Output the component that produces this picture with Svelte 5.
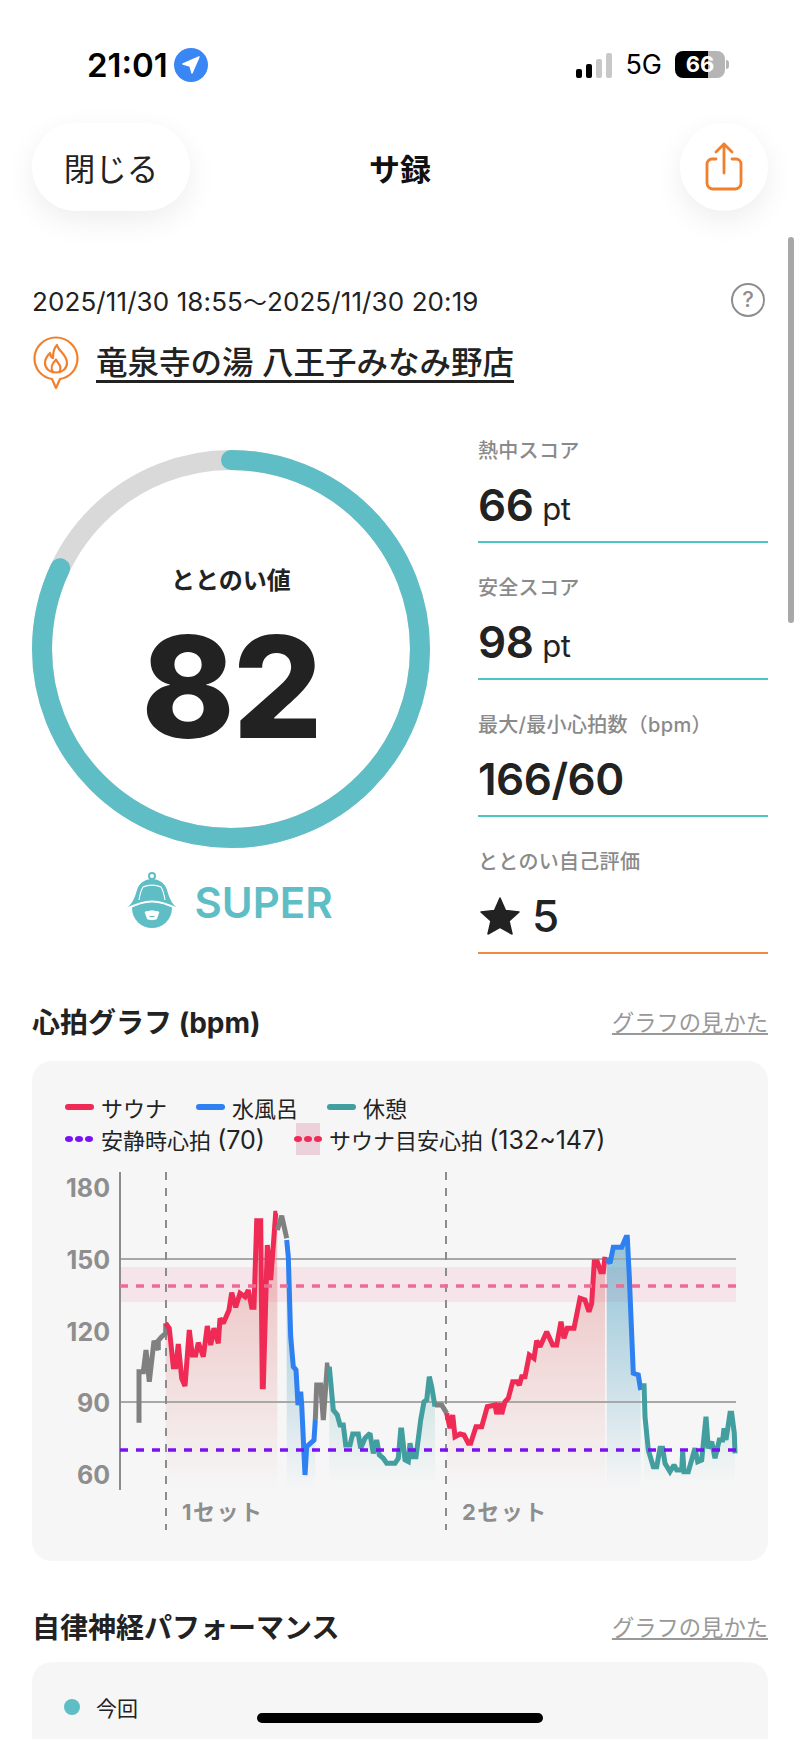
<script>
  // points are read off the chart at 3x, so convert them back to page pixels
  const toPts = (ox, oy, s) =>
    s.trim().split(/\s+/).map((p) => {
      const [x, y] = p.split(',').map(Number)
      return [ox + x / 3, oy + y / 3]
    })
  const a = (s) => toPts(30, 1070, s)
  const b = (s) => toPts(400, 1150, s)

  const COLORS = { red: '#ee2a55', blue: '#2f80f0', teal: '#429e9f', grey: '#808080' }

  const series = [
    { c: 'grey', p: a('327,1058 327,905 340,905 348,840 358,935 372,812 385,840 385,812 395,800 407,790 407,760') },
    { c: 'red', fill: true, p: a('407,760 418,775 430,890 437,890 445,822 455,925 465,948 478,780 487,855 497,855 505,818 520,860 532,768 542,825 552,775 565,820 570,745 580,760 597,720 605,668 617,712 630,670 645,680 655,660 665,712 672,712 680,452 692,452 697,950 700,950 712,525 722,630 737,430 742,430') },
    { c: 'grey', p: a('742,480 755,437 770,505') },
    { c: 'blue', fill: true, p: a('770,510 775,560 782,800 790,890 798,900 804,1005 812,965 815,1005 825,1215 830,1130 852,1110 856,1050') },
    { c: 'grey', p: a('856,1050 860,945 872,945 880,1050 892,885 898,885') },
    { c: 'teal', fill: true, p: [
      ...a('898,890 910,1020 922,1035 930,1065 940,1065 947,1125 960,1125 968,1092 985,1092 992,1135 1005,1105 1020,1090 1030,1150 1040,1110 1048,1155 1060,1165 1070,1180 1095,1180 1105,1165 1112,1080'),
      ...b('5,840 15,930 25,935 30,880 38,920 48,920 62,810 72,755 80,750 88,680 95,710 105,770')
    ] },
    { c: 'grey', p: b('105,765 125,765 140,790') },
    { c: 'red', fill: true, p: b('140,790 150,835 158,795 165,860 180,852 192,855 205,880 212,880 228,830 245,830 262,770 285,765 290,792 300,760 305,792 315,755 325,745 338,695 350,695 358,705 365,680 375,680 388,615 402,625 410,572 420,590 440,545 458,585 470,585 483,515 492,565 502,535 522,535 540,445 555,450 567,485 575,460 583,335 592,335 602,365 610,365 615,320') },
    { c: 'blue', fill: true, p: b('620,325 630,340 640,292 665,292 678,262 682,262 688,380 700,670 715,675 722,720') },
    { c: 'teal', fill: true, p: b('732,700 735,800 745,900 760,950 770,950 780,895 788,895 795,940 810,965 822,945 830,960 845,960 848,905 852,965 865,965 885,895 893,935 905,930 918,800 925,895 935,875 945,925 958,870 968,870 972,835 978,870 990,790 995,790 1003,850 1005,910') }
  ]

  const str = (p) => p.map(([x, y]) => `${x.toFixed(1)},${y.toFixed(1)}`).join(' ')
  const area = (p) => `${str(p)} ${p[p.length - 1][0].toFixed(1)},1490 ${p[0][0].toFixed(1)},1490`

  const yLabels = [
    { t: '180', y: 1197 },
    { t: '150', y: 1269 },
    { t: '120', y: 1341 },
    { t: '90', y: 1412 },
    { t: '60', y: 1484 }
  ]

  const stats = [
    { label: '熱中スコア', value: '66', unit: 'pt' },
    { label: '安全スコア', value: '98', unit: 'pt' },
    { label: '最大/最小心拍数（bpm）', value: '166/60' }
  ]

  const R = 189
  const CIRC = 2 * Math.PI * R
  const score = 82
</script>

<div class="page">
  <div class="status">
    <div class="status-left">
      <span class="time">21:01</span>
      <svg class="loc" viewBox="0 0 34 34">
        <circle cx="17" cy="17" r="17" fill="#3a86f5" />
        <path d="M25 9 L9 16 L16 18 L18 25 Z" fill="#fff" stroke="#fff" stroke-width="1.4" stroke-linejoin="round" />
      </svg>
    </div>
    <div class="status-right">
      <div class="signal">
        <i class="on h1"></i><i class="on h2"></i><i class="h3"></i><i class="h4"></i>
      </div>
      <span class="net">5G</span>
      <div class="battery"><span>66</span></div>
      <div class="cap"></div>
    </div>
  </div>

  <header class="nav">
    <button class="close">閉じる</button>
    <div class="title">サ録</div>
    <button class="share" aria-label="share">
      <svg width="38" height="50" viewBox="0 0 38 50" fill="none" stroke="#f07f2e" stroke-width="2.8" stroke-linecap="round" stroke-linejoin="round">
        <path d="M11 17 H7 A5 5 0 0 0 2 22 V41 A6 6 0 0 0 8 47 H30 A6 6 0 0 0 36 41 V22 A5 5 0 0 0 31 17 H27" />
        <path d="M19 31 V2 M11 10 L19 2 L27 10" />
      </svg>
    </button>
  </header>

  <section class="summary">
    <div class="date-row">
      <span class="date">2025/11/30 18:55<span class="tilde">～</span>2025/11/30 20:19</span>
      <span class="help">?</span>
    </div>
    <div class="venue">
      <svg width="46" height="54" viewBox="0 0 46 54" fill="none" stroke="#f07f2e" stroke-width="2.2" stroke-linejoin="round" stroke-linecap="round">
        <path d="M23 1.5 C11 1.5 1.5 11 1.5 22.5 C1.5 33 9 41.5 19 43 L23 52 L27 43 C37 41.5 44.5 33 44.5 22.5 C44.5 11 35 1.5 23 1.5 Z" />
        <path d="M24 9 C25 15 34 18 34 27 C34 33 29 36.5 23 36.5 C17 36.5 12 33 12 27 C12 23 14 20 17 17 C17.5 20 18.5 21.5 20 22 C20 17 21 12 24 9 Z" />
        <path d="M20 36 C17 32 18.5 28.5 23 23.5 C25 28 29.5 30 26.5 36" />
      </svg>
      <span class="venue-name">竜泉寺の湯 八王子みなみ野店</span>
    </div>

    <div class="score">
      <div class="gauge-col">
        <div class="gauge">
          <svg width="398" height="398" viewBox="0 0 398 398" fill="none">
            <circle cx="199" cy="199" r={R} stroke="#d9d9d9" stroke-width="20" />
            <circle
              cx="199"
              cy="199"
              r={R}
              stroke="#5fbec5"
              stroke-width="20"
              stroke-linecap="round"
              stroke-dasharray={`${(CIRC * score) / 100} ${CIRC}`}
              transform="rotate(-90 199 199)"
            />
          </svg>
          <div class="gauge-text">
            <div class="gauge-label">ととのい値</div>
            <div class="gauge-value">{score}</div>
          </div>
        </div>
        <div class="rank">
          <svg width="52" height="57" viewBox="0 0 52 57">
            <circle cx="26" cy="36" r="20" fill="#5fbec5" />
            <path d="M1 36 C7 31 9 25 11 18 C13 11 19 7 26 7 C33 7 39 11 41 18 C43 25 45 31 51 36 C40 30 33 28 26 28 C19 28 12 30 1 36 Z" fill="#5fbec5" />
            <path d="M1 37 C12 31 19 29.5 26 29.5 C33 29.5 40 31 51 37" fill="none" stroke="#fff" stroke-width="2" />
            <path d="M13 28 C14 22 15 18 17 15 C22 12.5 30 12.5 35 15 C37 18 38 22 39 28" fill="none" stroke="#fff" stroke-width="1.1" />
            <circle cx="26" cy="4" r="3" fill="none" stroke="#5fbec5" stroke-width="2" />
            <path d="M19 40 Q26 37.5 33 40 L30.5 47 Q26 48.5 21.5 47 Z" fill="#fff" stroke="#fff" stroke-width="0.8" stroke-linejoin="round" />
            <path d="M23.5 44.5 H28.5" stroke="#5fbec5" stroke-width="1.2" />
          </svg>
          <span>SUPER</span>
        </div>
      </div>

      <div class="stats">
        {#each stats as s}
          <div class="stat">
            <div class="stat-label">{s.label}</div>
            <div class="stat-value">{s.value}{#if s.unit}<small>{s.unit}</small>{/if}</div>
          </div>
        {/each}
        <div class="stat orange">
          <div class="stat-label">ととのい自己評価</div>
          <div class="stat-value">
            <svg class="star" width="40" height="38" viewBox="0 0 40 38">
              <path d="M20 1 L25.5 13.5 L39 15 L29 24 L32 37 L20 30.3 L8 37 L11 24 L1 15 L14.5 13.5 Z" fill="#222" stroke="#222" stroke-width="1.5" stroke-linejoin="round" />
            </svg>
            <span class="star-num">5</span>
          </div>
        </div>
      </div>
    </div>
  </section>

  <section class="block first">
    <div class="block-head">
      <h2>心拍グラフ (bpm)</h2>
      <span class="link">グラフの見かた</span>
    </div>
    <div class="card chart-card">
      <div class="legend">
        <div class="legend-row">
          <i class="swatch" style="background:{COLORS.red}"></i><span class="l1">サウナ</span>
          <i class="swatch" style="background:{COLORS.blue}"></i><span class="l2">水風呂</span>
          <i class="swatch" style="background:{COLORS.teal}"></i><span>休憩</span>
        </div>
        <div class="legend-row">
          <span class="dots purple"><i></i><i></i><i></i></span><span class="l3">安静時心拍 <b>(70)</b></span>
          <span class="band-key"><span class="dots pink"><i></i><i></i><i></i></span></span><span>サウナ目安心拍 <b>(132~147)</b></span>
        </div>
      </div>
      <svg class="chart" width="736" height="401" viewBox="32 1160 736 401" fill="none">
        <defs>
          <linearGradient id="g-red" gradientUnits="userSpaceOnUse" x1="0" y1="1260" x2="0" y2="1490">
            <stop offset="0" stop-color="#d84a4a" stop-opacity="0.3" />
            <stop offset="1" stop-color="#d84a4a" stop-opacity="0" />
          </linearGradient>
          <linearGradient id="g-blue" gradientUnits="userSpaceOnUse" x1="0" y1="1260" x2="0" y2="1490">
            <stop offset="0" stop-color="#3c96bc" stop-opacity="0.5" />
            <stop offset="1" stop-color="#3c96bc" stop-opacity="0" />
          </linearGradient>
          <linearGradient id="g-teal" gradientUnits="userSpaceOnUse" x1="0" y1="1380" x2="0" y2="1485">
            <stop offset="0" stop-color="#429e9f" stop-opacity="0.22" />
            <stop offset="1" stop-color="#429e9f" stop-opacity="0" />
          </linearGradient>
        </defs>

        <rect x="120" y="1267" width="616" height="35" fill="#ee6488" fill-opacity="0.12" />

        {#each series as s}
          {#if s.fill}
            <polygon points={area(s.p)} fill="url(#g-{s.c})" />
          {/if}
        {/each}

        <path d="M120 1259 H736 M120 1402 H736" stroke="#a8a8a8" stroke-width="2" />
        <path d="M166 1172 V1530 M446 1172 V1530" stroke="#8c8c8c" stroke-width="2" stroke-dasharray="8 8" />
        <path d="M120 1172 V1490" stroke="#8c8c8c" stroke-width="2" />

        {#each series as s}
          <polyline points={str(s.p)} stroke={COLORS[s.c]} stroke-width="5" stroke-linejoin="miter" stroke-miterlimit="2" />
        {/each}

        <path d="M120 1286 H736" stroke="#ef6a94" stroke-width="3.5" stroke-dasharray="8 8" />
        <path d="M120 1450 H736" stroke="#7b10f5" stroke-width="3.5" stroke-dasharray="8 8" />

        {#each yLabels as l}
          <text class="y-label" x="110" y={l.y} text-anchor="end">{l.t}</text>
        {/each}
        <text class="set-label" x="182" y="1520">1セット</text>
        <text class="set-label" x="462" y="1520">2セット</text>
      </svg>
    </div>
  </section>

  <section class="block second">
    <div class="block-head">
      <h2>自律神経パフォーマンス</h2>
      <span class="link">グラフの見かた</span>
    </div>
    <div class="card perf-card">
      <div class="perf-legend"><i></i><span>今回</span></div>
    </div>
  </section>

  <div class="scrollbar"></div>
  <div class="home"></div>
</div>

<style>
  :global(body) {
    margin: 0;
    background: #fff;
  }
  .page {
    position: relative;
    width: 800px;
    height: 1739px;
    overflow: hidden;
    background: #fff;
    color: #222;
    font-family: Inter, "Noto Sans CJK JP", sans-serif;
  }

  .status {
    display: flex;
    justify-content: space-between;
    height: 123px;
    box-sizing: border-box;
    padding: 48px 71px 0 87px;
    color: #000;
  }
  .status-left {
    display: flex;
    align-items: flex-start;
    gap: 6px;
  }
  .time {
    font-size: 33px;
    line-height: 34px;
    font-weight: 600;
  }
  .loc {
    width: 34px;
    height: 34px;
  }
  .status-right {
    display: flex;
    align-items: flex-start;
  }
  .signal {
    display: flex;
    align-items: flex-end;
    gap: 3.5px;
    height: 25px;
    margin-top: 5px;
  }
  .signal i {
    display: block;
    width: 6.5px;
    border-radius: 2px;
    background: #c8c8c8;
  }
  .signal .on {
    background: #000;
  }
  .h1 { height: 9px; }
  .h2 { height: 14px; }
  .h3 { height: 19px; }
  .h4 { height: 25px; }
  .net {
    margin-left: 13px;
    font-size: 27px;
    line-height: 34px;
    font-weight: 400;
  }
  .battery {
    margin-left: 13px;
    margin-top: 3px;
    width: 50px;
    height: 27px;
    border-radius: 8px;
    background: linear-gradient(90deg, #000 66%, #b5b5b5 66%);
    color: #fff;
    font-size: 22px;
    line-height: 27px;
    font-weight: 700;
    text-align: center;
  }
  .cap {
    width: 3px;
    height: 9px;
    margin-top: 12px;
    margin-left: 1px;
    border-radius: 0 3px 3px 0;
    background: #b5b5b5;
  }

  .nav {
    display: grid;
    grid-template-columns: 1fr auto 1fr;
    align-items: center;
    height: 88px;
    padding: 0 32px;
  }
  .close,
  .share {
    border: 0;
    background: #fff;
    box-shadow: 0 10px 30px rgba(0, 0, 0, 0.07);
    font-family: inherit;
    color: #222;
    padding: 0;
  }
  .close {
    justify-self: start;
    width: 158px;
    height: 88px;
    border-radius: 44px;
    font-size: 31.5px;
  }
  .share {
    justify-self: end;
    display: flex;
    align-items: center;
    justify-content: center;
    width: 88px;
    height: 88px;
    border-radius: 50%;
  }
  .title {
    font-size: 31px;
    font-weight: 700;
    color: #111;
  }

  .summary {
    padding: 0 32px;
  }
  .date-row {
    display: flex;
    justify-content: space-between;
    align-items: center;
    height: 34px;
    margin-top: 72px;
  }
  .date {
    font-size: 26px;
    letter-spacing: 0.1px;
    color: #222;
  }
  .tilde {
    letter-spacing: 0;
    font-size: 24px;
  }
  .help {
    box-sizing: border-box;
    width: 34px;
    height: 34px;
    margin-right: 3px;
    border: 2.5px solid #8e8e8e;
    border-radius: 50%;
    color: #8e8e8e;
    font-size: 22px;
    line-height: 29px;
    font-weight: 500;
    text-align: center;
  }
  .venue {
    display: flex;
    align-items: center;
    gap: 17px;
    height: 54px;
    margin-top: 19px;
    padding-left: 1px;
  }
  .venue-name {
    font-size: 31.5px;
    font-weight: 500;
    line-height: 34px;
    border-bottom: 3px solid #222;
    margin-top: 3px;
  }

  .score {
    display: flex;
    justify-content: space-between;
    margin-top: 45px;
  }
  .gauge-col {
    padding-top: 15px;
    width: 398px;
  }
  .gauge {
    position: relative;
    width: 398px;
    height: 398px;
  }
  .gauge svg {
    display: block;
  }
  .gauge-text {
    position: absolute;
    top: 115px;
    left: 0;
    right: 0;
    text-align: center;
  }
  .gauge-label {
    font-size: 24px;
    line-height: 32px;
    font-weight: 700;
  }
  .gauge-value {
    margin-top: 35px;
    font-size: 141px;
    line-height: 110px;
    font-weight: 800;
    letter-spacing: -2px;
  }
  .rank {
    display: flex;
    align-items: center;
    justify-content: center;
    gap: 16px;
    margin-top: 24px;
    padding-right: 3px;
    font-size: 42px;
    font-weight: 600;
    color: #5fbec5;
  }
  .rank span {
    margin-top: 3px;
  }

  .stats {
    display: flex;
    flex-direction: column;
    gap: 29px;
    width: 290px;
  }
  .stat {
    box-sizing: border-box;
    height: 108px;
    border-bottom: 2px solid #4ec5c0;
  }
  .stat.orange {
    border-bottom-color: #f08a3c;
  }
  .stat-label {
    height: 30px;
    font-size: 20px;
    line-height: 33px;
    font-weight: 500;
    letter-spacing: 0.3px;
    color: #8a8a8a;
  }
  .stat-value {
    display: flex;
    align-items: center;
    height: 76px;
    padding-top: 4px;
    box-sizing: border-box;
    font-size: 44px;
    font-weight: 600;
    letter-spacing: -0.5px;
  }
  .stat-value small {
    margin-left: 9px;
    font-size: 31px;
    font-weight: 400;
    margin-top: 6px;
  }
  .star {
    margin-left: 2px;
  }
  .star-num {
    margin-left: 12px;
    font-weight: 500;
  }

  .block {
    padding: 0 32px;
  }
  .block.first {
    margin-top: 48px;
  }
  .block.second {
    margin-top: 46px;
  }
  .block-head {
    display: flex;
    justify-content: space-between;
    align-items: center;
    height: 38px;
    margin-bottom: 21px;
  }
  .second .block-head {
    margin-bottom: 17px;
  }
  h2 {
    margin: 0;
    font-size: 28px;
    font-weight: 700;
  }
  .link {
    font-size: 22.3px;
    color: #999;
    text-decoration: underline;
  }
  .card {
    border-radius: 20px;
    background: #f6f6f6;
  }
  .chart-card {
    height: 500px;
    overflow: hidden;
  }
  .legend {
    height: 99px;
    box-sizing: border-box;
    padding: 30px 0 0 33px;
    font-size: 22px;
    color: #222;
  }
  .legend-row {
    display: flex;
    align-items: center;
    height: 32px;
  }
  .legend b {
    font-weight: 400;
    font-size: 25px;
  }
  .swatch {
    width: 29px;
    height: 6px;
    border-radius: 3px;
    margin-right: 7px;
  }
  .l1,
  .l2 {
    width: 95px;
  }
  .l3 {
    margin-right: 31px;
  }
  .dots {
    display: flex;
    gap: 2px;
  }
  .dots i {
    width: 8px;
    height: 6px;
    border-radius: 50%;
  }
  .purple {
    margin-right: 8px;
  }
  .purple i {
    background: #7b10f5;
  }
  .pink i {
    background: #ee2a55;
  }
  .band-key {
    display: flex;
    align-items: center;
    justify-content: center;
    width: 24px;
    height: 32px;
    margin-right: 9px;
    background: #ecd0da;
  }
  .chart {
    display: block;
  }
  .y-label {
    font-size: 25px;
    font-weight: 700;
    fill: #8e8e8e;
  }
  .set-label {
    font-size: 22px;
    font-weight: 700;
    letter-spacing: 1.5px;
    fill: #8e8e8e;
  }
  .perf-card {
    height: 200px;
  }
  .perf-legend {
    display: flex;
    align-items: center;
    gap: 16px;
    padding: 30px 0 0 32px;
    font-size: 21px;
  }
  .perf-legend i {
    width: 16px;
    height: 16px;
    border-radius: 50%;
    background: #5fbec5;
  }

  .scrollbar {
    position: absolute;
    left: 788px;
    top: 237px;
    width: 6px;
    height: 386px;
    border-radius: 3px;
    background: #a8a8a8;
  }
  .home {
    position: absolute;
    left: 257px;
    top: 1713px;
    width: 286px;
    height: 10px;
    border-radius: 5px;
    background: #000;
  }
</style>
